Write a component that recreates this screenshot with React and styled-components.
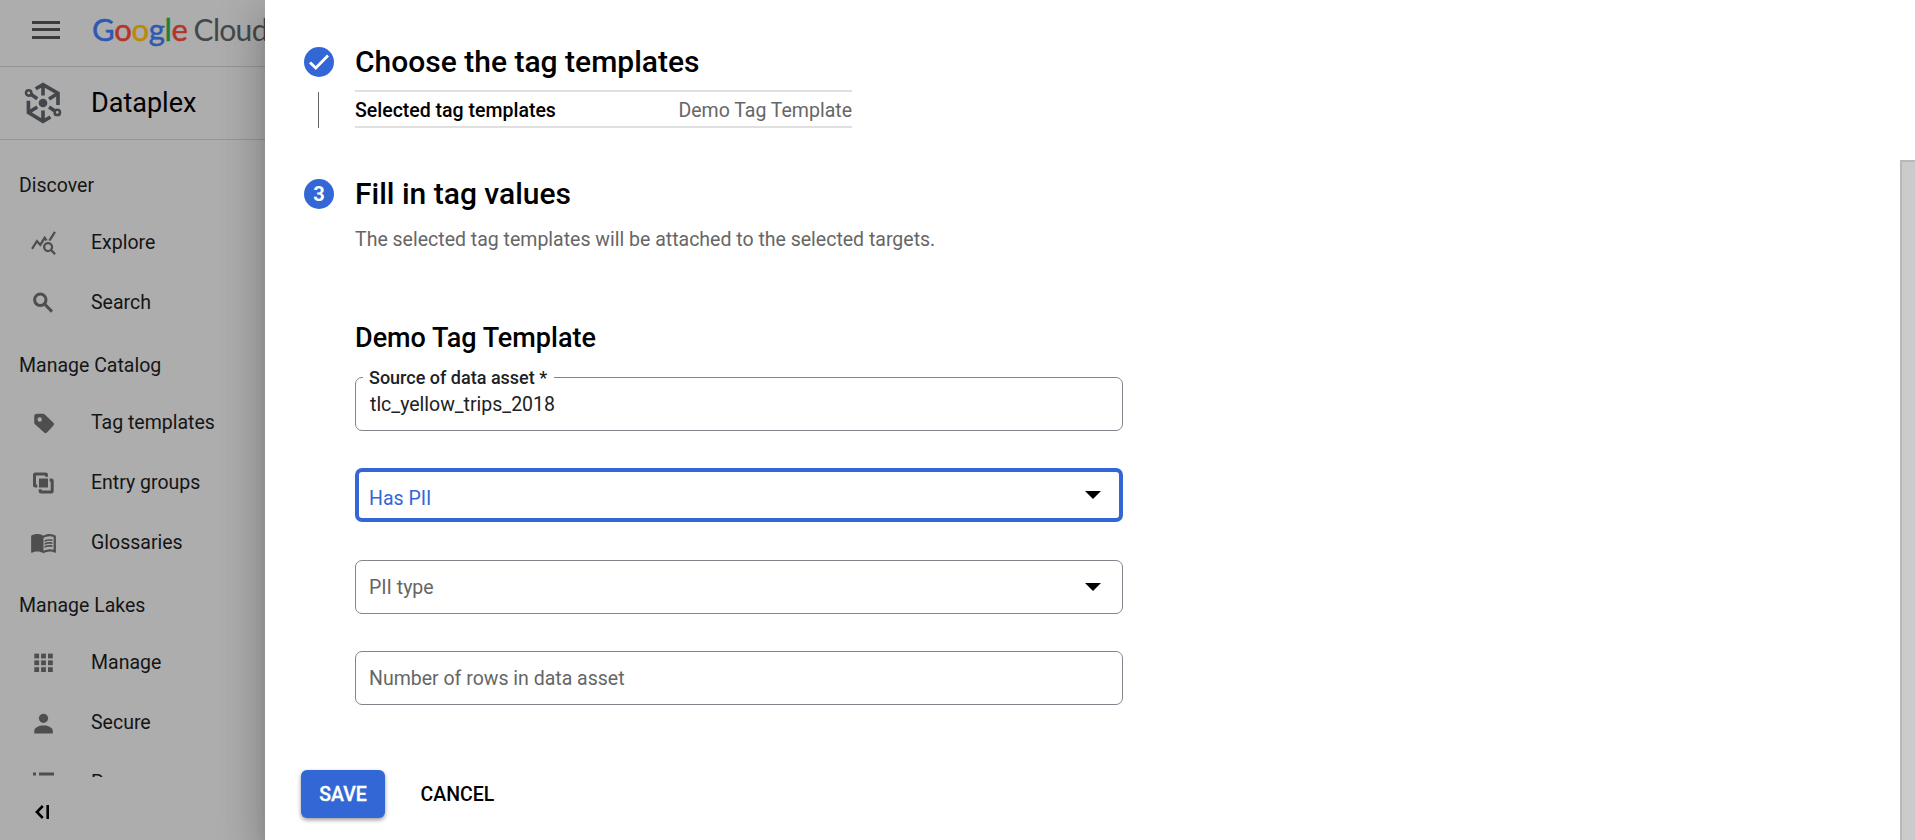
import React from 'react';
import styled, { createGlobalStyle } from 'styled-components';
import { MdQueryStats, MdMenuBook } from 'react-icons/md';

const GlobalStyle = createGlobalStyle`
  *, *::before, *::after { box-sizing: border-box; }
  html, body { margin: 0; padding: 0; overflow: hidden; }
  body { font-family: Roboto, "Liberation Sans", sans-serif; font-size: 19.5px; color: #000; }
`;

const Page = styled.div`
  display: flex;
  width: 1915px;
  height: 840px;
  background: #adadad;
`;

const Nav = styled.nav`
  display: flex;
  flex-direction: column;
  width: 265px;
  flex: none;
  overflow: hidden;
`;

const TopBar = styled.div`
  display: flex;
  align-items: center;
  flex: none;
  height: 67px;
  padding-left: 32px;
  border-bottom: 1px solid #959595;
`;

const Burger = styled.div`
  display: flex;
  flex-direction: column;
  gap: 4.5px;
  width: 28px;
  flex: none;
  margin: -7px 32px 0 0;
  i { height: 3px; background: #3c3c3c; }
`;

const Brand = styled.div`
  font-family: Lato, sans-serif;
  font-size: 30px;
  line-height: 40px;
  margin-top: -8px;
  letter-spacing: -0.7px;
  white-space: nowrap;
  color: #45484b;
`;

const BrandWord = styled.span`
  font-size: 31px;
  letter-spacing: -0.3px;
  margin-right: 6px;
  -webkit-text-stroke: 0.5px currentColor;
`;

const Letter = styled.span`
  color: ${(p) => p.$c};
  -webkit-text-stroke-color: ${(p) => p.$c};
`;

const Product = styled.div`
  display: flex;
  align-items: center;
  flex: none;
  height: 73px;
  padding-left: 23px;
  border-bottom: 1px solid #959595;
`;

const ProductName = styled.div`
  font-size: 27px;
  line-height: 32px;
  margin: 0 0 0 27px;
`;

const Menu = styled.div`
  height: 637px;
  flex: none;
  padding-top: 12px;
  overflow: hidden;
  color: #151515;
`;

const Section = styled.div`
  height: 60px;
  padding: 7px 0 0 19px;
  line-height: 54px;
`;

const Item = styled.div`
  display: flex;
  align-items: center;
  height: 60px;
  padding-left: 30px;
  svg { width: 27px; height: 27px; flex: none; color: #4e4e4e; }
`;

const ItemLabel = styled.span`
  margin-left: 34px;
  white-space: nowrap;
`;

const Collapse = styled.div`
  display: flex;
  padding: 27px 0 0 34px;
`;

const Drawer = styled.main`
  display: flex;
  flex: 1;
  background: #fff;
  box-shadow:
    0 12px 15px -7px rgba(0, 0, 0, 0.2),
    0 24px 36px 3px rgba(0, 0, 0, 0.14),
    0 9px 45px 8px rgba(0, 0, 0, 0.12);
`;

const Content = styled.div`
  flex: 1;
  padding: 44px 0 0 39px;
`;

const Step = styled.section`
  display: grid;
  grid-template-columns: 30px 1fr;
  column-gap: 21px;
  height: ${(p) => p.$h}px;
`;

const Rail = styled.div`
  display: flex;
  flex-direction: column;
  align-items: center;
  padding-top: 3px;
`;

const Badge = styled.div`
  display: flex;
  align-items: center;
  justify-content: center;
  width: 30px;
  height: 30px;
  border-radius: 50%;
  background: #3367d6;
  color: #fff;
  font-size: 20px;
  font-weight: 700;
`;

const Connector = styled.div`
  width: 1px;
  height: 36px;
  margin: 15px 1px 0 0;
  background: #666;
`;

const Heading = styled.h2`
  margin: 0;
  font-size: 30px;
  line-height: 35px;
  font-weight: 500;
`;

const Summary = styled.div`
  display: flex;
  justify-content: space-between;
  align-items: center;
  width: 497px;
  height: 38px;
  margin-top: 11px;
  padding-top: 2px;
  border: solid #e0e0e0;
  border-width: 2px 0;
  line-height: 23px;
  color: #666;
  white-space: nowrap;
  strong { font-weight: 500; color: #000; }
`;

const Description = styled.p`
  margin: 17px 0 0;
  line-height: 23px;
  color: #666;
`;

const TemplateName = styled.h3`
  margin: 71px 0 23px;
  font-size: 27px;
  line-height: 32px;
  font-weight: 500;
`;

const Field = styled.fieldset`
  display: flex;
  align-items: center;
  justify-content: space-between;
  width: 768px;
  height: 54px;
  min-width: 0;
  margin: 0 0 ${(p) => p.$gap || 37}px;
  padding: ${(p) => (p.$focus ? '6px 18px 0 10px' : '0 21px 0 13px')};
  border: ${(p) => (p.$focus ? '4px solid #3367d6' : '1px solid #80868b')};
  border-radius: 7px;
  color: ${(p) => (p.$focus ? '#3367d6' : '#666')};
`;

const LabeledField = styled.fieldset`
  width: 768px;
  height: 64px;
  min-width: 0;
  margin: -10px 0 37px;
  padding: 0 0 0 7px;
  border: 1px solid #80868b;
  border-radius: 7px;
  color: #202124;
`;

const Legend = styled.legend`
  width: 191px;
  padding: 0 0 0 6px;
  font-size: 18px;
  line-height: 21px;
  font-weight: 500;
  white-space: nowrap;
`;

const Value = styled.div`
  padding: 5px 0 0 7px;
  line-height: 23px;
`;

const Arrow = styled.i`
  border: solid transparent;
  border-width: 8px 8px 0;
  border-top-color: #000;
  margin-top: ${(p) => p.$shift || 0}px;
`;

const Actions = styled.div`
  display: flex;
  align-items: center;
  margin: 65px 0 0 -3px;
`;

const Button = styled.button`
  height: 48px;
  padding: 1px 0 0;
  border: 0;
  border-radius: 6px;
  font: 500 19.5px/47px Roboto, sans-serif;
  width: ${(p) => (p.$primary ? 84 : 145)}px;
  background: ${(p) => (p.$primary ? '#3367d6' : 'transparent')};
  color: ${(p) => (p.$primary ? '#fff' : '#000')};
  box-shadow: ${(p) => (p.$primary ? '0 2px 4px rgba(0, 0, 0, 0.4)' : 'none')};
  -webkit-text-stroke: ${(p) => (p.$primary ? '0.3px #fff' : '0')};
`;

const Scrollbar = styled.div`
  width: 15px;
  height: 680px;
  align-self: flex-end;
  background: #cbcbcb;
  box-shadow: inset 2px 2px 0 #b8b8b8;
`;

const DataplexIcon = () => (
  <svg width="41" height="44" viewBox="0 0 41 44" fill="none" stroke="#43464a" strokeWidth="3.6">
    <path d="M12.700 7.700 20 3.600 35 12.300V24M35 12.300 26 18M20 3.600V14.500M5.400 19.700V31.500L20 40.300 27.500 36M5.400 31.500 14.300 26M20 40.300V29.500" />
    <path d="M8.200 13.600 14.300 17.700M26 26 31.500 29.800" />
    <circle cx="5.700" cy="12" r="2.700" strokeWidth="2.500" />
    <circle cx="34.300" cy="31.400" r="2.700" strokeWidth="2.500" />
    <circle cx="20" cy="22" r="4.300" fill="#43464a" stroke="none" />
  </svg>
);

const SearchIcon = () => (
  <svg viewBox="0 0 27 27" fill="none" stroke="currentColor" strokeWidth="3">
    <circle cx="10.300" cy="10.800" r="5.700" />
    <path d="M14.300 14.800 22 22.600" />
  </svg>
);

const TagIcon = () => (
  <svg viewBox="0 0 27 27" fill="currentColor" fillRule="evenodd">
    <path d="M4.200 7.500a2.800 2.800 0 0 1 2.800-2.800h5.800c.8 0 1.400.3 2 .8l8.600 8.200c.9.9.9 1.900 0 2.800l-6.400 7.100c-.9 1-1.900 1-2.900 0L5 15.300c-.5-.5-.8-1.100-.8-1.900zM9.700 8.300a2.200 2.200 0 1 0 0 4.400 2.200 2.200 0 0 0 0-4.400z" />
  </svg>
);

const GroupsIcon = () => (
  <svg viewBox="0 0 27 27" fill="none" stroke="currentColor" strokeWidth="3">
    <path d="M16.500 7.800V6a1 1 0 0 0-1-1h-10a1 1 0 0 0-1 1v10a1 1 0 0 0 1 1h1.800M19.700 11h1.500a1 1 0 0 1 1 1v10a1 1 0 0 1-1 1h-10a1 1 0 0 1-1-1v-1.800" />
    <rect x="9" y="9.500" width="9" height="9" fill="currentColor" stroke="none" />
  </svg>
);

const AppsIcon = () => (
  <svg viewBox="0 0 27 27" fill="currentColor">
    {[4.6, 11.4, 18.2].map((y) =>
      [4.3, 11.1, 18].map((x) => <rect key={`${x}-${y}`} x={x} y={y} width="4.800" height="4.800" />)
    )}
  </svg>
);

const PersonIcon = () => (
  <svg viewBox="0 0 27 27" fill="currentColor">
    <circle cx="13.500" cy="9.300" r="4.600" />
    <path d="M4.300 24.400v-2.600c0-3.400 4.600-5.400 9.200-5.400s9.300 2 9.300 5.400v2.600z" />
  </svg>
);

const ListIcon = () => (
  <svg viewBox="0 0 18 18" fill="currentColor">
    <path d="M2 2.300h2v2H2zM6 2.300h10v2H6zM2 8h2v2H2zM6 8h10v2H6zM2 13.700h2v2H2zM6 13.700h10v2H6z" />
  </svg>
);

const CollapseIcon = () => (
  <svg width="16" height="16" viewBox="0 0 16 16" fill="none" stroke="#000" strokeWidth="2.600">
    <path d="M8.800 2 2.900 8l5.900 6M13.700 1v14" />
  </svg>
);

const CheckIcon = () => (
  <svg width="22" height="18" viewBox="0 0 22 18" fill="none" stroke="#fff" strokeWidth="2.800">
    <path d="M2 9.500 7.800 15 20 2.500" />
  </svg>
);

const brand = [
  ['G', '#2d59b0'], ['o', '#b2352b'], ['o', '#b98a08'],
  ['g', '#2d59b0'], ['l', '#227d3a'], ['e', '#b2352b'],
];

const menu = [
  { title: 'Discover', items: [['Explore', MdQueryStats], ['Search', SearchIcon]] },
  {
    title: 'Manage Catalog',
    items: [['Tag templates', TagIcon], ['Entry groups', GroupsIcon], ['Glossaries', MdMenuBook]],
  },
  { title: 'Manage Lakes', items: [['Manage', AppsIcon], ['Secure', PersonIcon], ['Process', ListIcon]] },
];

export default function App() {
  return (
    <>
      <GlobalStyle />
      <Page>
        <Nav>
          <TopBar>
            <Burger><i /><i /><i /></Burger>
            <Brand>
              <BrandWord>
                {brand.map(([ch, c], i) => <Letter key={i} $c={c}>{ch}</Letter>)}
              </BrandWord>
              Cloud
            </Brand>
          </TopBar>
          <Product>
            <DataplexIcon />
            <ProductName>Dataplex</ProductName>
          </Product>
          <Menu>
            {menu.map((s) => (
              <React.Fragment key={s.title}>
                <Section>{s.title}</Section>
                {s.items.map(([label, Icon]) => (
                  <Item key={label}>
                    <Icon />
                    <ItemLabel>{label}</ItemLabel>
                  </Item>
                ))}
              </React.Fragment>
            ))}
          </Menu>
          <Collapse><CollapseIcon /></Collapse>
        </Nav>
        <Drawer>
          <Content>
            <Step $h={132}>
              <Rail>
                <Badge><CheckIcon /></Badge>
                <Connector />
              </Rail>
              <div>
                <Heading>Choose the tag templates</Heading>
                <Summary>
                  <strong>Selected tag templates</strong>
                  <span>Demo Tag Template</span>
                </Summary>
              </div>
            </Step>
            <Step $h={529}>
              <Rail><Badge>3</Badge></Rail>
              <div>
                <Heading>Fill in tag values</Heading>
                <Description>
                  The selected tag templates will be attached to the selected targets.
                </Description>
                <TemplateName>Demo Tag Template</TemplateName>
                <LabeledField>
                  <Legend>Source of data asset *</Legend>
                  <Value>tlc_yellow_trips_2018</Value>
                </LabeledField>
                <Field $focus $gap={38}>Has PII<Arrow $shift={-7} /></Field>
                <Field>PII type<Arrow /></Field>
                <Field>Number of rows in data asset</Field>
              </div>
            </Step>
            <Actions>
              <Button $primary>SAVE</Button>
              <Button>CANCEL</Button>
            </Actions>
          </Content>
          <Scrollbar />
        </Drawer>
      </Page>
    </>
  );
}
